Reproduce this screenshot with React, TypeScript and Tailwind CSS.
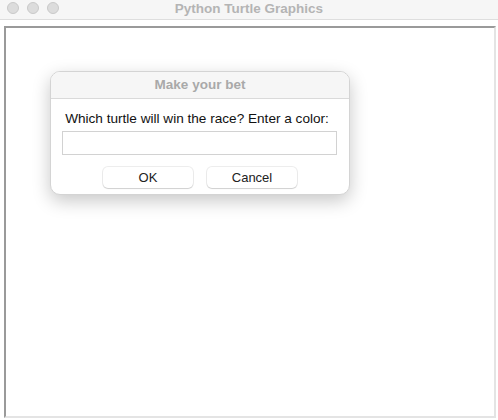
export default function App() {
  return (
    <div
      className="w-[498px] h-[420px] bg-white flex flex-col overflow-hidden"
      style={{ fontFamily: '"Liberation Sans", Arial, sans-serif' }}
    >
      {/* Title bar */}
      <div className="relative h-[20px] bg-[#f6f6f6] border-b border-[#dedede] flex justify-center shrink-0">
        <div className="absolute left-[7px] top-[2px] flex gap-[8px]">
          <span className="w-[12px] h-[12px] rounded-full bg-[#dcdcdc] border border-[#c9c9c9]" />
          <span className="w-[12px] h-[12px] rounded-full bg-[#dcdcdc] border border-[#c9c9c9]" />
          <span className="w-[12px] h-[12px] rounded-full bg-[#dcdcdc] border border-[#c9c9c9]" />
        </div>
        <span className="mt-[2px] text-[13.5px] font-bold text-[#b4b4b4] leading-[14px]">Python Turtle Graphics</span>
      </div>

      {/* Canvas */}
      <div className="flex-1 pt-[6px] pl-[4px] pr-[2px] pb-[2px] flex">
        <div className="relative flex-1 bg-white border-t-2 border-l-2 border-[#9a9a9a] border-r-2 border-b-2 border-r-[#e4e4e4] border-b-[#e4e4e4]">
          {/* Dialog */}
          <div className="absolute left-[44px] top-[43px] w-[300px] h-[124px] bg-white rounded-[10px] border border-[#d4d4d4] shadow-[0_6px_18px_rgba(0,0,0,0.22)] overflow-hidden flex flex-col">
            <div className="h-[27px] bg-[#f6f6f6] border-b border-[#dadada] flex items-center justify-center">
              <span className="text-[13.5px] font-bold text-[#a9a9a9]">Make your bet</span>
            </div>
            <div className="flex flex-col items-center pt-[12px]">
              <p className="pr-[6px] text-[13.6px] text-[#111] leading-[16px]">Which turtle will win the race? Enter a color:</p>
              <div className="mt-[4px] w-[275px] h-[24px] border border-[#d2d2d2] bg-white -translate-x-[1px]" />
              <div className="mt-[12px] flex gap-[14px]">
                <button className="w-[90px] h-[21px] rounded-[5px] bg-white shadow-[0_0_0_1px_rgba(0,0,0,0.07),0_1px_1px_rgba(0,0,0,0.12)] text-[13px] text-[#222] leading-none">
                  OK
                </button>
                <button className="w-[90px] h-[21px] rounded-[5px] bg-white shadow-[0_0_0_1px_rgba(0,0,0,0.07),0_1px_1px_rgba(0,0,0,0.12)] text-[13px] text-[#222] leading-none">
                  Cancel
                </button>
              </div>
            </div>
          </div>
        </div>
      </div>
    </div>
  )
}
